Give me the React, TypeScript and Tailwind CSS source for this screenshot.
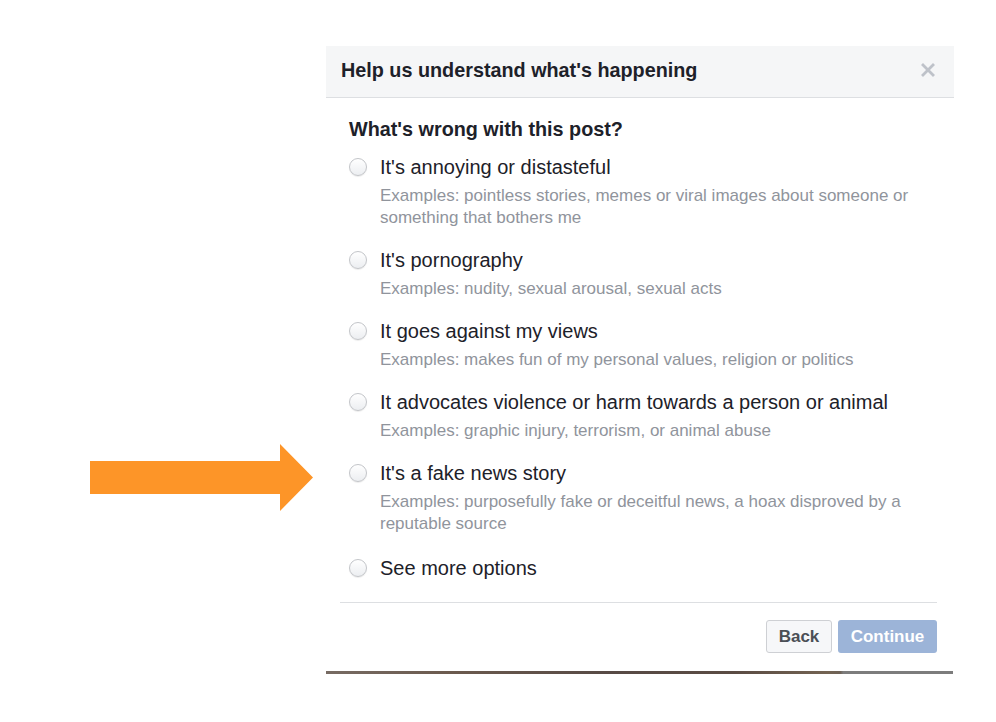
import React from "react";

const OPTIONS = [
  {
    title: "It's annoying or distasteful",
    examples: "Examples: pointless stories, memes or viral images about someone or something that bothers me",
  },
  { title: "It's pornography", examples: "Examples: nudity, sexual arousal, sexual acts" },
  {
    title: "It goes against my views",
    examples: "Examples: makes fun of my personal values, religion or politics",
  },
  {
    title: "It advocates violence or harm towards a person or animal",
    examples: "Examples: graphic injury, terrorism, or animal abuse",
  },
  {
    title: "It's a fake news story",
    examples: "Examples: purposefully fake or deceitful news, a hoax disproved by a reputable source",
  },
];

function Radio() {
  return (
    <span className="mt-[3px] h-[18px] w-[18px] flex-shrink-0 rounded-full border border-[#c3c5c9] bg-gradient-to-b from-white to-[#eceef1] shadow-[0_1px_1px_rgba(0,0,0,0.08)]" />
  );
}

function Arrow() {
  return (
    <svg
      className="absolute left-[90px] top-[444px]"
      width="224"
      height="68"
      viewBox="0 0 224 68"
    >
      <polygon points="0,17 190,17 190,0 223,33.5 190,67 190,50 0,50" fill="#fd9528" />
    </svg>
  );
}

export default function App() {
  return (
    <div
      className="relative h-[722px] w-[996px] bg-white pt-[46px]"
      style={{ fontFamily: '"Liberation Sans", Arial, sans-serif' }}
    >
      <Arrow />
      <div className="ml-[326px] w-[628px]">
        {/* header */}
        <div className="flex h-[52px] items-center justify-between border-b border-[#dddfe2] bg-[#f5f6f7] pb-[4px] pl-[15px] pr-[19px]">
          <span className="text-[19.8px] font-bold leading-6 text-[#1d2129]">
            Help us understand what's happening
          </span>
          <svg width="14" height="14" viewBox="0 0 14 14" className="mt-[1px]">
            <path d="M2 2 L12 12 M12 2 L2 12" stroke="#bec2c9" strokeWidth="2.8" strokeLinecap="square" />
          </svg>
        </div>

        {/* body */}
        <div className="pl-[23px] pr-[17px] pt-[19px]">
          <div className="text-[19.8px] font-bold leading-6 text-[#1d2129]">What's wrong with this post?</div>
          <div className="mt-[14px] flex flex-col gap-[19px]">
            {OPTIONS.map((o) => (
              <div key={o.title} className="flex gap-[13px]">
                <Radio />
                <div className="flex-1">
                  <div className="text-[20px] leading-6 text-[#1d2129]">{o.title}</div>
                  <div className="mt-[6px] text-[17px] leading-[22px] text-[#90949c]">{o.examples}</div>
                </div>
              </div>
            ))}
          </div>
          <div className="mt-[21px] flex gap-[13px]">
            <Radio />
            <div className="text-[20px] leading-6 text-[#1d2129]">See more options</div>
          </div>
        </div>

        {/* footer */}
        <div className="ml-[14px] mr-[17px] mt-[22px] flex justify-end gap-[6px] border-t border-[#dddfe2] pb-[18px] pt-[17px]">
          <button className="h-[33px] w-[66px] rounded-[3px] border border-[#ced0d4] bg-[#f6f7f9] text-[17px] font-bold text-[#4b4f56]">
            Back
          </button>
          <button className="h-[33px] w-[99px] rounded-[3px] bg-[#9cb4d8] text-[17px] font-bold text-white">
            Continue
          </button>
        </div>
        <div className="h-[3px] w-[627px] bg-[linear-gradient(90deg,#776b63_0%,#6b5a4e_20%,#574a45_45%,#5a4b43_65%,#736352_80%,#6d6156_82%,#7c7c7c_82.5%,#7c7c7c_100%)]" />
      </div>
    </div>
  );
}
